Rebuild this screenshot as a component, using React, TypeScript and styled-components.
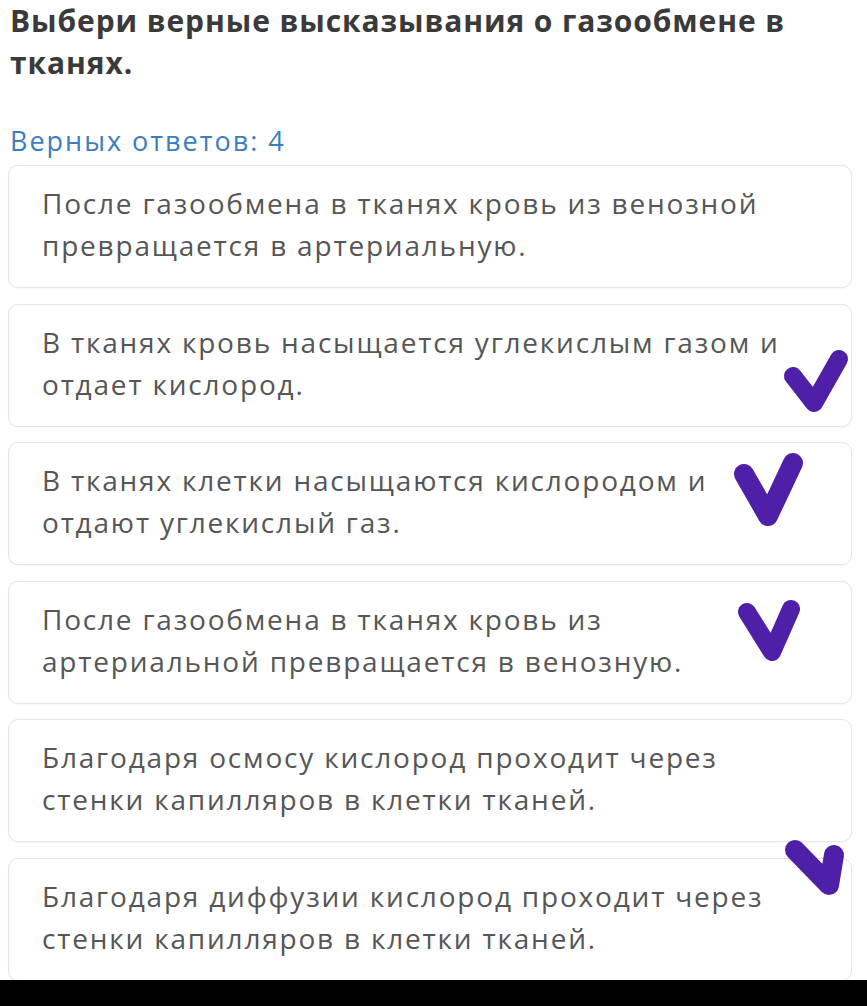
import React from "react";
import styled, { createGlobalStyle } from "styled-components";

type Mark = { l: [number, number]; b: [number, number]; r: [number, number]; w: number };

type Option = { text: string; mark?: Mark };

const options: Option[] = [
  { text: "После газообмена в тканях кровь из венозной превращается в артериальную." },
  {
    text: "В тканях кровь насыщается углекислым газом и отдает кислород.",
    mark: { l: [784, 71], b: [805, 98], r: [830, 54], w: 18 },
  },
  {
    text: "В тканях клетки насыщаются кислородом и отдают углекислый газ.",
    mark: { l: [735, 31], b: [759, 73], r: [784, 20], w: 20 },
  },
  {
    text: "После газообмена в тканях кровь из артериальной превращается в венозную.",
    mark: { l: [738, 30], b: [763, 70], r: [782, 27], w: 18 },
  },
  { text: "Благодаря осмосу кислород проходит через стенки капилляров в клетки тканей." },
  {
    text: "Благодаря диффузии кислород проходит через стенки капилляров в клетки тканей.",
    mark: { l: [786, -9], b: [820, 26], r: [825, -4], w: 20 },
  },
];

const Check = ({ mark }: { mark: Mark }) => (
  <CheckSvg>
    <path
      d={`M${mark.l[0]} ${mark.l[1]} L${mark.b[0]} ${mark.b[1]} L${mark.r[0]} ${mark.r[1]}`}
      fill="none"
      stroke="#4f20a7"
      strokeWidth={mark.w}
      strokeLinecap="round"
      strokeLinejoin="round"
    />
  </CheckSvg>
);

const App = () => {
  return (
    <>
      <GlobalStyle />
      <Page>
        <Question>Выбери верные высказывания о газообмене в тканях.</Question>
        <Hint>Верных ответов: 4</Hint>
        <List>
          {options.map((o) => (
            <Card key={o.text}>
              <CardText>{o.text}</CardText>
              {o.mark && <Check mark={o.mark} />}
            </Card>
          ))}
        </List>
      </Page>
      <BottomBar />
    </>
  );
};

const GlobalStyle = createGlobalStyle`
  html, body {
    margin: 0;
    padding: 0;
    background: #ffffff;
  }
  body {
    font-family: "Open Sans", "Noto Sans", sans-serif;
  }
`;

const Page = styled.div`
  height: 980px;
  box-sizing: border-box;
  padding: 0 15px 0 8px;
  overflow: hidden;
`;

const Question = styled.h1`
  margin: 0 0 0 2px;
  font-size: 30px;
  line-height: 42px;
  font-weight: 700;
  letter-spacing: 0.9px;
  color: #3a3a3a;
`;

const Hint = styled.div`
  margin: 42px 0 0 2px;
  font-size: 27px;
  line-height: 30px;
  letter-spacing: 2px;
  color: #3b7ec0;
`;

const List = styled.div`
  display: flex;
  flex-direction: column;
  gap: 15.5px;
  margin-top: 9px;
`;

const Card = styled.div`
  position: relative;
  height: 123px;
  box-sizing: border-box;
  padding: 16px 56px 0 33px;
  background: #ffffff;
  border: 1px solid #e4e4e4;
  border-radius: 10px;
  box-shadow: 0 1px 2px rgba(0, 0, 0, 0.04);
`;

const CardText = styled.div`
  font-size: 28px;
  line-height: 42px;
  letter-spacing: 1.8px;
  color: #565656;
`;

const CheckSvg = styled.svg`
  position: absolute;
  left: 0;
  top: 0;
  width: 100%;
  height: 100%;
  overflow: visible;
  pointer-events: none;
`;

const BottomBar = styled.div`
  height: 26px;
  background: #000000;
`;

export default App;
